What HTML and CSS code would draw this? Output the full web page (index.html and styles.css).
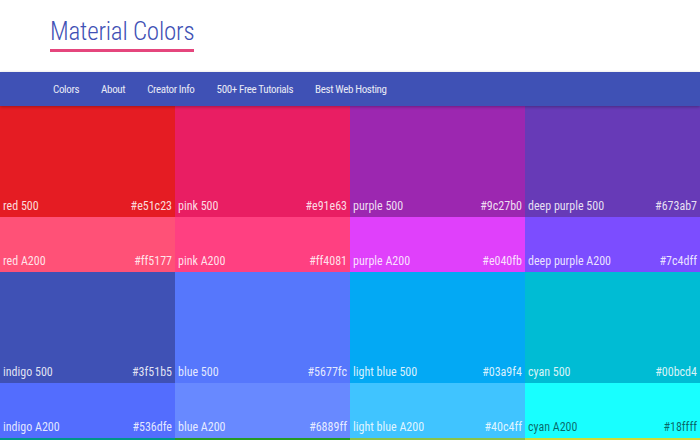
FILE: index.html
```html
<!DOCTYPE html>
<html lang="en">
<head>
    <meta charset="UTF-8">
    <meta name="viewport" content="width=device-width, initial-scale=1.0">
    <title>Material Colors</title>
    <link rel="stylesheet" href="styles.css">
</head>
<body>
    <header class="site-header">
        <h1 class="site-title">Material Colors</h1>
    </header>

    <nav class="main-nav">
        <a href="#">Colors</a>
        <a href="#">About</a>
        <a href="#">Creator Info</a>
        <a href="#">500+ Free Tutorials</a>
        <a href="#">Best Web Hosting</a>
    </nav>

    <main class="swatches">
        <div class="swatch tone-500" style="background:#e51c23"><span>red 500</span><span>#e51c23</span></div>
        <div class="swatch tone-500" style="background:#e91e63"><span>pink 500</span><span>#e91e63</span></div>
        <div class="swatch tone-500" style="background:#9c27b0"><span>purple 500</span><span>#9c27b0</span></div>
        <div class="swatch tone-500" style="background:#673ab7"><span>deep purple 500</span><span>#673ab7</span></div>

        <div class="swatch tone-a200" style="background:#ff5177"><span>red A200</span><span>#ff5177</span></div>
        <div class="swatch tone-a200" style="background:#ff4081"><span>pink A200</span><span>#ff4081</span></div>
        <div class="swatch tone-a200" style="background:#e040fb"><span>purple A200</span><span>#e040fb</span></div>
        <div class="swatch tone-a200" style="background:#7c4dff"><span>deep purple A200</span><span>#7c4dff</span></div>

        <div class="swatch tone-500" style="background:#3f51b5"><span>indigo 500</span><span>#3f51b5</span></div>
        <div class="swatch tone-500" style="background:#5677fc"><span>blue 500</span><span>#5677fc</span></div>
        <div class="swatch tone-500" style="background:#03a9f4"><span>light blue 500</span><span>#03a9f4</span></div>
        <div class="swatch tone-500" style="background:#00bcd4"><span>cyan 500</span><span>#00bcd4</span></div>

        <div class="swatch tone-a200" style="background:#536dfe"><span>indigo A200</span><span>#536dfe</span></div>
        <div class="swatch tone-a200" style="background:#6889ff"><span>blue A200</span><span>#6889ff</span></div>
        <div class="swatch tone-a200" style="background:#40c4ff"><span>light blue A200</span><span>#40c4ff</span></div>
        <div class="swatch tone-a200 dark-text" style="background:#18ffff"><span>cyan A200</span><span>#18ffff</span></div>

        <div class="swatch tone-500" style="background:#009688"><span>teal 500</span><span>#009688</span></div>
        <div class="swatch tone-500" style="background:#259b24"><span>green 500</span><span>#259b24</span></div>
        <div class="swatch tone-500" style="background:#8bc34a"><span>light green 500</span><span>#8bc34a</span></div>
        <div class="swatch tone-500" style="background:#cddc39"><span>lime 500</span><span>#cddc39</span></div>
    </main>
</body>
</html>
```

FILE: styles.css
```css
body {
    font-family: "Roboto Condensed", "Liberation Sans Narrow", Roboto, sans-serif;
    margin: 0;
    padding: 0;
    background-color: #fff;
}
.site-header {
    height: 72px;
    padding: 0 0 0 50px;
    box-sizing: border-box;
}
.site-title {
    display: inline-block;
    margin: 0;
    padding: 18px 0 3px;
    font-family: "Roboto Condensed", Roboto, sans-serif;
    font-weight: 300;
    font-size: 25px;
    line-height: 28px;
    letter-spacing: -0.2px;
    color: #3f51b5;
    border-bottom: 3px solid #e5467d;
}
.main-nav {
    display: flex;
    gap: 22px;
    height: 34px;
    align-items: center;
    padding-left: 53px;
    background-color: #3f51b5;
    box-shadow: 0 1px 3px rgba(0, 0, 0, 0.3);
    position: relative;
}
.main-nav a {
    color: #e8eaf6;
    text-decoration: none;
    font-size: 11px;
    letter-spacing: -0.35px;
}
.swatches {
    display: grid;
    grid-template-columns: repeat(4, 1fr);
}
.swatch {
    display: flex;
    justify-content: space-between;
    align-items: flex-end;
    box-sizing: border-box;
    padding: 0 3px 4px;
    color: rgba(255, 255, 255, 0.85);
    font-size: 12px;
    white-space: nowrap;
}
.tone-500 {
    height: 111px;
}
.tone-a200 {
    height: 55px;
}
.dark-text {
    color: rgba(0, 0, 0, 0.6);
}
```
